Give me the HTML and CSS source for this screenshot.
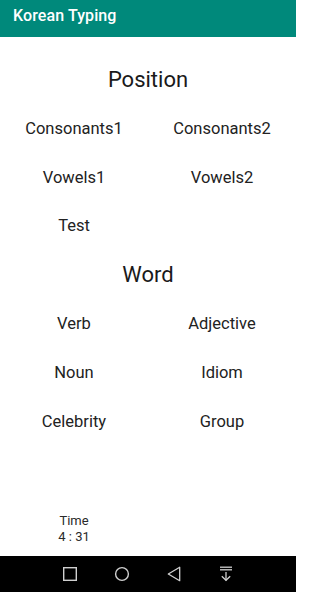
FILE: index.html
```html
<!DOCTYPE html>
<html>
<head>
<meta charset="utf-8">
<link rel="stylesheet" href="styles.css">
</head>
<body>
<div class="app">
  <header class="appbar">Korean Typing</header>
  <main class="content">
    <h2 class="section-title">Position</h2>
    <div class="grid">
      <div class="item">Consonants1</div>
      <div class="item">Consonants2</div>
      <div class="item">Vowels1</div>
      <div class="item">Vowels2</div>
      <div class="item">Test</div>
    </div>
    <h2 class="section-title">Word</h2>
    <div class="grid">
      <div class="item">Verb</div>
      <div class="item">Adjective</div>
      <div class="item">Noun</div>
      <div class="item">Idiom</div>
      <div class="item">Celebrity</div>
      <div class="item">Group</div>
    </div>
    <div class="timer">
      <div class="timer-box">
        <div>Time</div>
        <div>4 : 31</div>
      </div>
    </div>
  </main>
  <nav class="navbar">
    <span class="nav-slot">
      <svg width="16" height="16" viewBox="0 0 16 16"><rect x="1.7" y="1.7" width="12.6" height="12.6" fill="none" stroke="#d0d0d0" stroke-width="1.4"/></svg>
    </span>
    <span class="nav-slot">
      <svg width="16" height="16" viewBox="0 0 16 16"><circle cx="8" cy="8" r="6.4" fill="none" stroke="#d0d0d0" stroke-width="1.4"/></svg>
    </span>
    <span class="nav-slot">
      <svg width="16" height="16" viewBox="0 0 16 16"><path d="M2.3 8 L13.7 1.3 L13.7 14.7 Z" fill="none" stroke="#d0d0d0" stroke-width="1.3" stroke-linejoin="round"/></svg>
    </span>
    <span class="nav-slot">
      <svg width="16" height="16" viewBox="0 0 16 16"><g fill="none" stroke="#d0d0d0" stroke-width="1.3"><path d="M2 1.2 H14"/><path d="M2 3.8 H14"/><path d="M8 6 V14.5"/><path d="M3.8 10.2 L8 14.3 L12.2 10.2"/></g></svg>
    </span>
  </nav>
</div>
</body>
</html>
```
FILE: styles.css
```css
* { box-sizing: border-box; }
html, body { margin: 0; padding: 0; background: #ffffff; }
body { font-family: Roboto, "Noto Sans", "Liberation Sans", sans-serif; color: #222222; }
.app { width: 296px; height: 592px; display: flex; flex-direction: column; }
.appbar {
  height: 37px;
  background: #00897b;
  color: #ffffff;
  font-size: 16px;
  font-weight: 500;
  line-height: 21px;
  padding: 5px 13px 0;
  letter-spacing: 0.1px;
}
.content { flex: 1; display: flex; flex-direction: column; padding-top: 19px; padding-bottom: 11px; }
.section-title {
  margin: 0;
  font-size: 22px;
  font-weight: 400;
  line-height: 48.8px;
  text-align: center;
  color: #1a1a1a;
}
.grid { display: grid; grid-template-columns: 1fr 1fr; }
.item { text-align: center; font-size: 16.5px; line-height: 48.8px; }
.timer { margin-top: auto; display: grid; grid-template-columns: 1fr 1fr; }
.timer-box { text-align: center; font-size: 13px; line-height: 16px; color: #2a2a2a; }
.navbar {
  height: 36px;
  background: #000000;
  display: flex;
  justify-content: center;
  align-items: center;
}
.nav-slot { width: 52px; display: flex; justify-content: center; align-items: center; }
.nav-slot svg { display: block; }
```
